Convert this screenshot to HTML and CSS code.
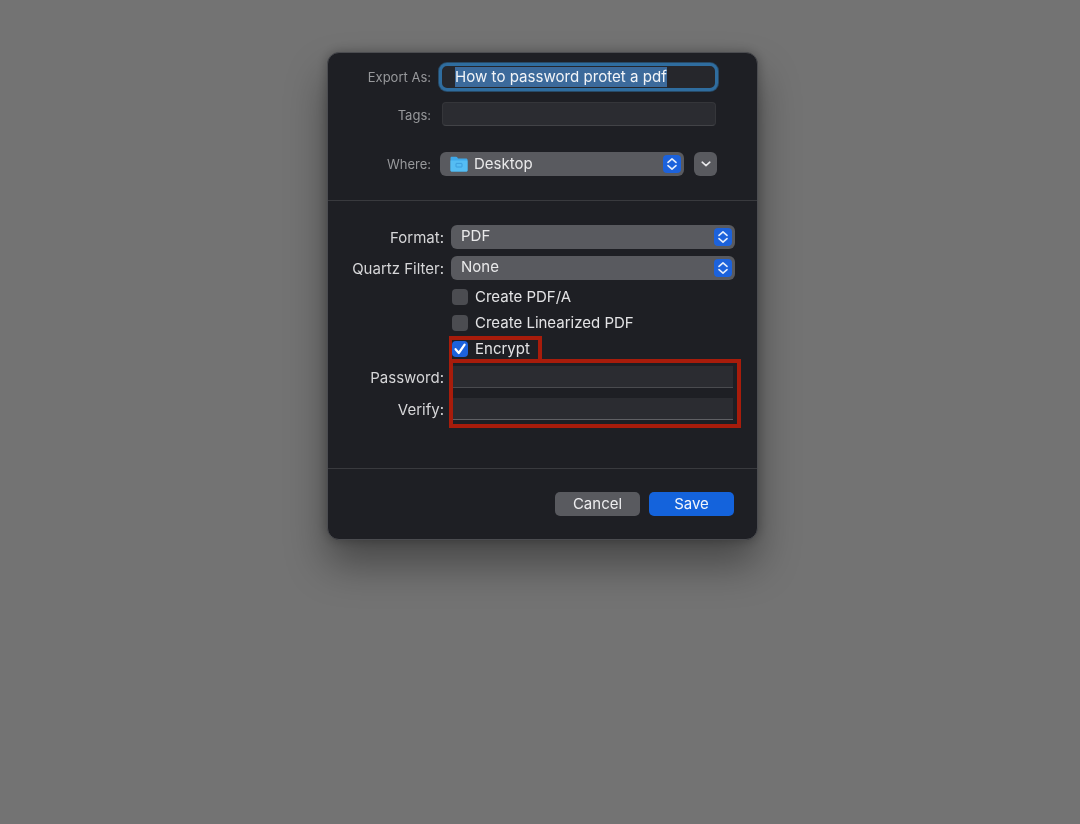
FILE: index.html
```html
<!DOCTYPE html>
<html lang="en">
<head>
<meta charset="utf-8">
<title>Export As</title>
<link rel="stylesheet" href="styles.css">
</head>
<body>
<div class="dialog">
  <section class="top">
    <div class="row row-export">
      <label class="label-sm">Export As:</label>
      <div class="name-field"><span class="selected">How to password protet a pdf</span></div>
    </div>
    <div class="row row-tags">
      <label class="label-sm label-tags">Tags:</label>
      <div class="tags-field"></div>
    </div>
    <div class="row row-where">
      <label class="label-sm label-where">Where:</label>
      <div class="popup where-popup">
        <svg class="folder" viewBox="0 0 18 16" width="18" height="16"><path d="M0.5 2.2C0.5 1.3 1.1 0.8 2 0.8H6C6.7 0.8 7 1.1 7.4 1.6L8 2.4H16C17 2.4 17.5 3 17.5 3.8V14C17.5 15 17 15.5 16 15.5H2C1 15.5 0.5 15 0.5 14Z" fill="#3fa9ea"/><path d="M0.5 4.6H17.5V14C17.5 15 17 15.5 16 15.5H2C1 15.5 0.5 15 0.5 14Z" fill="#55bdf3"/><rect x="6" y="7.4" width="6" height="3.6" rx=".5" fill="none" stroke="#3696d6" stroke-width=".8"/></svg>
        <span class="popup-text">Desktop</span>
        <svg class="spinner" viewBox="0 0 18 18" width="18" height="18"><rect width="18" height="18" rx="4" fill="#1c62dc"/><path d="M5 7.4L9 3.9L13 7.4M5 10.6L9 14.1L13 10.6" fill="none" stroke="#e6eefc" stroke-width="1.6" stroke-linecap="round" stroke-linejoin="round"/></svg>
      </div>
      <div class="expand"><svg viewBox="0 0 10 6" width="10" height="6"><path d="M1.2 1.2L5 4.6L8.8 1.2" fill="none" stroke="#e8e8ea" stroke-width="1.6" stroke-linecap="round" stroke-linejoin="round"/></svg></div>
    </div>
  </section>

  <section class="middle">
    <div class="row row-format">
      <label class="label">Format:</label>
      <div class="popup format-popup">
        <span class="popup-text">PDF</span>
        <svg class="spinner" viewBox="0 0 18 18" width="18" height="18"><rect width="18" height="18" rx="4" fill="#1c62dc"/><path d="M5 7.4L9 3.9L13 7.4M5 10.6L9 14.1L13 10.6" fill="none" stroke="#e6eefc" stroke-width="1.6" stroke-linecap="round" stroke-linejoin="round"/></svg>
      </div>
    </div>
    <div class="row row-quartz">
      <label class="label">Quartz Filter:</label>
      <div class="popup format-popup">
        <span class="popup-text">None</span>
        <svg class="spinner" viewBox="0 0 18 18" width="18" height="18"><rect width="18" height="18" rx="4" fill="#1c62dc"/><path d="M5 7.4L9 3.9L13 7.4M5 10.6L9 14.1L13 10.6" fill="none" stroke="#e6eefc" stroke-width="1.6" stroke-linecap="round" stroke-linejoin="round"/></svg>
      </div>
    </div>
    <div class="row check-row check-first"><span class="check"></span><span class="check-text">Create PDF/A</span></div>
    <div class="row check-row"><span class="check"></span><span class="check-text">Create Linearized PDF</span></div>
    <div class="row check-row">
      <span class="check checked"><svg viewBox="0 0 16 16" width="16" height="16"><path d="M3.6 8.2L6.8 12L12.6 3.6" fill="none" stroke="#fff" stroke-width="2.2" stroke-linecap="round" stroke-linejoin="round"/></svg></span>
      <span class="check-text">Encrypt</span>
    </div>
    <div class="row row-pass">
      <label class="label">Password:</label>
      <div class="pass-field"></div>
    </div>
    <div class="row row-verify">
      <label class="label">Verify:</label>
      <div class="pass-field"></div>
    </div>
  </section>

  <section class="bottom">
    <button class="btn cancel" type="button">Cancel</button>
    <button class="btn save" type="button">Save</button>
  </section>

  <div class="mark mark-encrypt"></div>
  <div class="mark mark-fields"></div>
</div>
</body>
</html>
```
FILE: styles.css
```css
* { box-sizing: border-box; }
html, body { margin: 0; height: 100%; }
body {
  width: 1080px;
  height: 824px;
  background: #737373;
  font-family: Inter, "Liberation Sans", sans-serif;
  padding: 52px 0 0 327px;
  overflow: hidden;
}
.dialog {
  position: relative;
  width: 431px;
  height: 488px;
  background: #1e1f24;
  border: 1px solid #4b4c50;
  border-radius: 12px;
  box-shadow: 0 24px 40px rgba(0, 0, 0, 0.38), 0 0 12px rgba(0, 0, 0, 0.28);
  display: flex;
  flex-direction: column;
  filter: blur(0.35px);
}
.row { display: flex; align-items: center; }
.top { padding: 10px 0 24px; border-bottom: 1px solid #393a3e; }
.middle { padding: 24px 0 48px; border-bottom: 1px solid #393a3e; }
.label-sm {
  width: 103px;
  text-align: right;
  font-size: 13px;
  color: #97989b;
  flex: none;
}
.label-tags { padding-top: 2px; }
.label-where { padding-bottom: 1px; }
.label {
  width: 116px;
  text-align: right;
  font-size: 15px;
  color: #d6d6d8;
  flex: none;
}
.row-export { height: 28px; }
.name-field {
  margin-left: 8px;
  width: 279px;
  height: 28px;
  border: 3px solid #2f6d9f;
  border-radius: 8px;
  box-shadow: 0 0 0 1px rgba(47, 109, 159, 0.55);
  background: #26272c;
  padding-left: 13px;
  display: flex;
  align-items: center;
}
.selected {
  background: #3c6a9b;
  color: #f2f4f7;
  font-size: 15.1px;
  line-height: 20px;
  white-space: nowrap;
}
.row-tags { height: 24px; margin-top: 11px; }
.tags-field {
  margin-left: 11px;
  width: 274px;
  height: 24px;
  border-radius: 4px;
  background: #2b2c31;
  border: 1px solid #35363a;
  border-bottom-color: #424347;
}
.row-where { height: 24px; margin-top: 26px; }
.popup {
  display: flex;
  align-items: center;
  border-radius: 6px;
  background: #595a5f;
  height: 24px;
  padding-right: 3px;
  color: #e9e9ea;
}
.where-popup { margin-left: 9px; width: 244px; padding-left: 10px; }
.format-popup { margin-left: 7px; width: 284px; padding-left: 10px; }
.popup-text { font-size: 15px; flex: 1; padding-bottom: 2px; }
.format-popup .popup-text { padding-bottom: 3px; }
.where-popup .popup-text { margin-left: 6px; }
.folder { flex: none; }
.spinner { flex: none; }
.expand {
  margin-left: 10px;
  width: 23px;
  height: 24px;
  border-radius: 6px;
  background: #595a5f;
  display: flex;
  align-items: center;
  justify-content: center;
}
.row-quartz { margin-top: 7px; }
.check-row { height: 16px; margin-top: 10px; padding-left: 124px; }
.check-first { margin-top: 9px; }
.check {
  width: 16px;
  height: 16px;
  border-radius: 4px;
  background: #4b4c51;
  flex: none;
  display: block;
}
.checked { background: #1c62dc; }
.check svg { display: block; }
.check-text {
  margin-left: 7px;
  font-size: 15px;
  color: #e3e3e5;
  white-space: nowrap;
  padding-bottom: 2px;
}
.row-pass { margin-top: 9px; }
.row-verify { margin-top: 10px; }
.pass-field {
  margin-left: 9px;
  width: 280px;
  height: 22px;
  background: #2b2c31;
  border-bottom: 1px solid #5f6064;
}
.row-pass .pass-field { border-bottom-color: #4a4b4f; }
.bottom {
  flex: 1;
  display: flex;
  justify-content: flex-end;
  gap: 9px;
  padding: 23px 23px 0 0;
  align-items: flex-start;
}
.btn {
  width: 85px;
  height: 24px;
  padding: 0 0 2px;
  border: 0;
  border-radius: 5px;
  font-family: inherit;
  font-size: 15px;
  color: #ececee;
}
.cancel { background: #595a5f; }
.save { background: #1463dc; color: #f2f5fb; }
.mark { position: absolute; border: 4px solid #a81c0b; }
.mark-encrypt { left: 121px; top: 283px; width: 93px; height: 25px; border-width: 4px 4px 0 3px; }
.mark-fields { left: 121px; top: 306px; width: 292px; height: 69px; }
```
